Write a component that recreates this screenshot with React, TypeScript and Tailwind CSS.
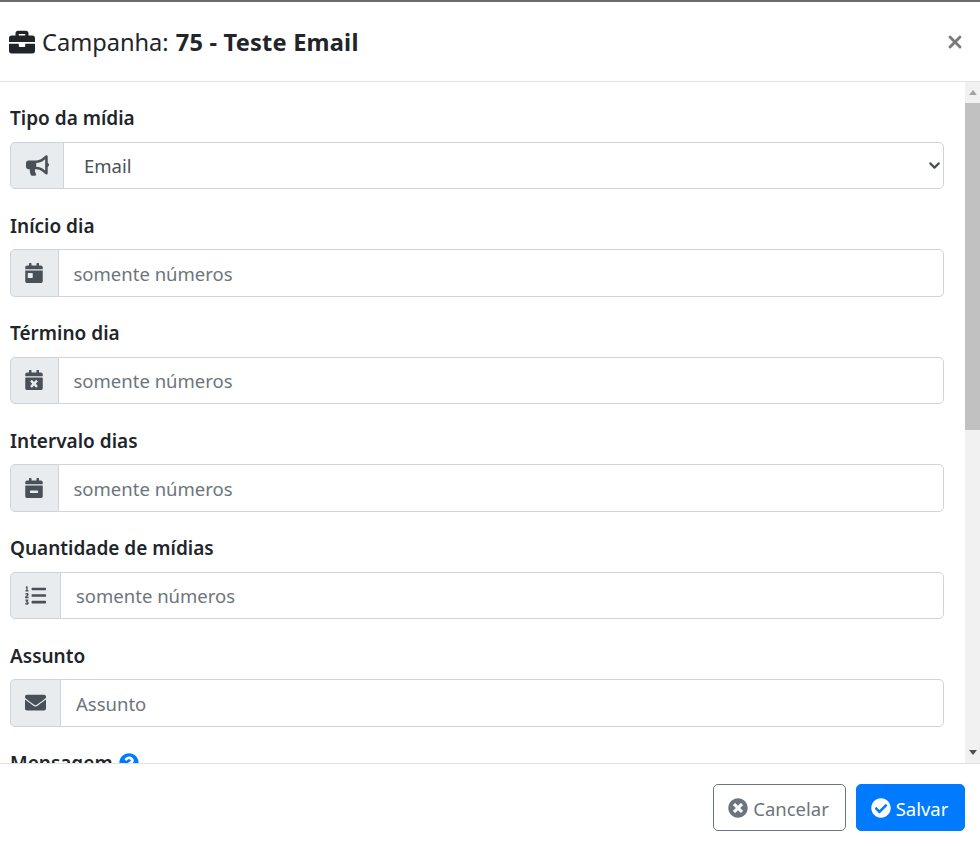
import React from 'react';
import {
  FaBriefcase,
  FaBullhorn,
  FaCalendarDay,
  FaCalendarTimes,
  FaCalendarMinus,
  FaListOl,
  FaEnvelope,
  FaQuestionCircle,
  FaTimesCircle,
  FaCheckCircle,
} from 'react-icons/fa';
import { X, ChevronDown } from 'lucide-react';

const fontStack = { fontFamily: '"Noto Sans", "Open Sans", sans-serif' };

const Field: React.FC<{ label: string; icon: React.ReactNode; addonWidth: string; placeholder: string }> = ({
  label,
  icon,
  addonWidth,
  placeholder,
}) => (
  <div className="mb-[22.5px]">
    <label className="block h-[27px] mb-[10.5px] text-[19px] leading-[28px] font-semibold text-[#212529]">{label}</label>
    <div className="flex h-[47.5px]">
      <div className={`${addonWidth} shrink-0 flex items-center justify-center bg-[#e9ecef] border border-[#ced4da] rounded-l-[5px] text-[#495057]`}>
        {icon}
      </div>
      <input
        placeholder={placeholder}
        className="flex-1 min-w-0 -ml-px px-[15px] pt-[2px] bg-white border border-[#ced4da] rounded-r-[5px] text-[18.5px] text-[#495057] placeholder:text-[#6c757d] outline-none"
      />
    </div>
  </div>
);

export default function App() {
  return (
    <div className="w-[980px] h-[846px] bg-white flex flex-col overflow-hidden border-t-2 border-[#6b6b6b]" style={fontStack}>
      {/* header */}
      <div className="h-[80px] shrink-0 flex items-center justify-between pl-[9px] pr-[15px] border-b border-[#dee2e6]">
        <h5 className="flex items-center pt-[3px] text-[23.6px] text-[#212529]">
          <FaBriefcase size={26} className="mr-[7px] -mt-[2px]" />
          <span className="mr-[1px]">Campanha:&nbsp;</span>
          <b className="font-bold tracking-[0.2px]">75 - Teste Email</b>
        </h5>
        <X size={20} strokeWidth={3.4} className="text-[#7b7b7b]" />
      </div>

      {/* body */}
      <div className="h-[681px] shrink-0 flex overflow-hidden">
        <div className="flex-1 min-w-0 pt-[22px] pl-[10px] pr-[21px] overflow-hidden">
          <div className="mb-[22.5px]">
            <label className="block h-[27px] mb-[10.5px] text-[19px] leading-[28px] font-semibold text-[#212529]">Tipo da mídia</label>
            <div className="flex h-[47.5px]">
              <div className="w-[54px] shrink-0 flex items-center justify-center bg-[#e9ecef] border border-[#ced4da] rounded-l-[5px] text-[#495057]">
                <FaBullhorn size={23} />
              </div>
              <div className="relative flex-1 min-w-0 -ml-px">
                <select className="w-full h-full appearance-none pl-[20px] pt-[2px] bg-white border border-[#ced4da] rounded-r-[5px] text-[18.5px] text-[#495057] outline-none">
                  <option>Email</option>
                </select>
                <ChevronDown size={17} strokeWidth={3} className="absolute right-[1px] top-[15px] text-[#495057]" />
              </div>
            </div>
          </div>
          <Field label="Início dia" addonWidth="w-[48.5px]" placeholder="somente números" icon={<FaCalendarDay size={20} />} />
          <Field label="Término dia" addonWidth="w-[48.5px]" placeholder="somente números" icon={<FaCalendarTimes size={20} />} />
          <Field label="Intervalo dias" addonWidth="w-[48.5px]" placeholder="somente números" icon={<FaCalendarMinus size={20} />} />
          <Field label="Quantidade de mídias" addonWidth="w-[51px]" placeholder="somente números" icon={<FaListOl size={21} />} />
          <Field label="Assunto" addonWidth="w-[51px]" placeholder="Assunto" icon={<FaEnvelope size={21} />} />
          <label className="flex items-center gap-[6px] h-[27px] text-[19px] leading-[28px] font-semibold text-[#212529]">
            Mensagem
            <FaQuestionCircle size={20} className="text-[#007bff]" />
          </label>
        </div>

        {/* scrollbar */}
        <div className="w-[15px] shrink-0 bg-[#f1f1f1] flex flex-col items-center">
          <div className="h-[21px] shrink-0 flex items-center justify-center">
            <div className="w-0 h-0 border-x-[4.5px] border-x-transparent border-b-[5px] border-b-[#a3a3a3]" />
          </div>
          <div className="w-full h-[327px] shrink-0 bg-[#c1c1c1]" />
          <div className="flex-1" />
          <div className="h-[21px] shrink-0 flex items-center justify-center">
            <div className="w-0 h-0 border-x-[4.5px] border-x-transparent border-t-[5px] border-t-[#505050]" />
          </div>
        </div>
      </div>

      {/* footer */}
      <div className="flex-1 flex justify-end items-start gap-[10px] pt-[20px] pr-[15px] border-t border-[#dee2e6]">
        <button className="w-[133px] h-[47px] flex items-center justify-center gap-[5px] pt-[2px] pr-[2px] bg-white border border-[#6c757d] rounded-[5px] text-[18.5px] text-[#6c757d]">
          <FaTimesCircle size={20} className="-mt-[2px]" />
          Cancelar
        </button>
        <button className="w-[109px] h-[47px] flex items-center justify-center gap-[5px] pt-[2px] pr-[2px] bg-[#007bff] border border-[#007bff] rounded-[5px] text-[18.5px] text-white">
          <FaCheckCircle size={20} className="-mt-[2px]" />
          Salvar
        </button>
      </div>
    </div>
  );
}
